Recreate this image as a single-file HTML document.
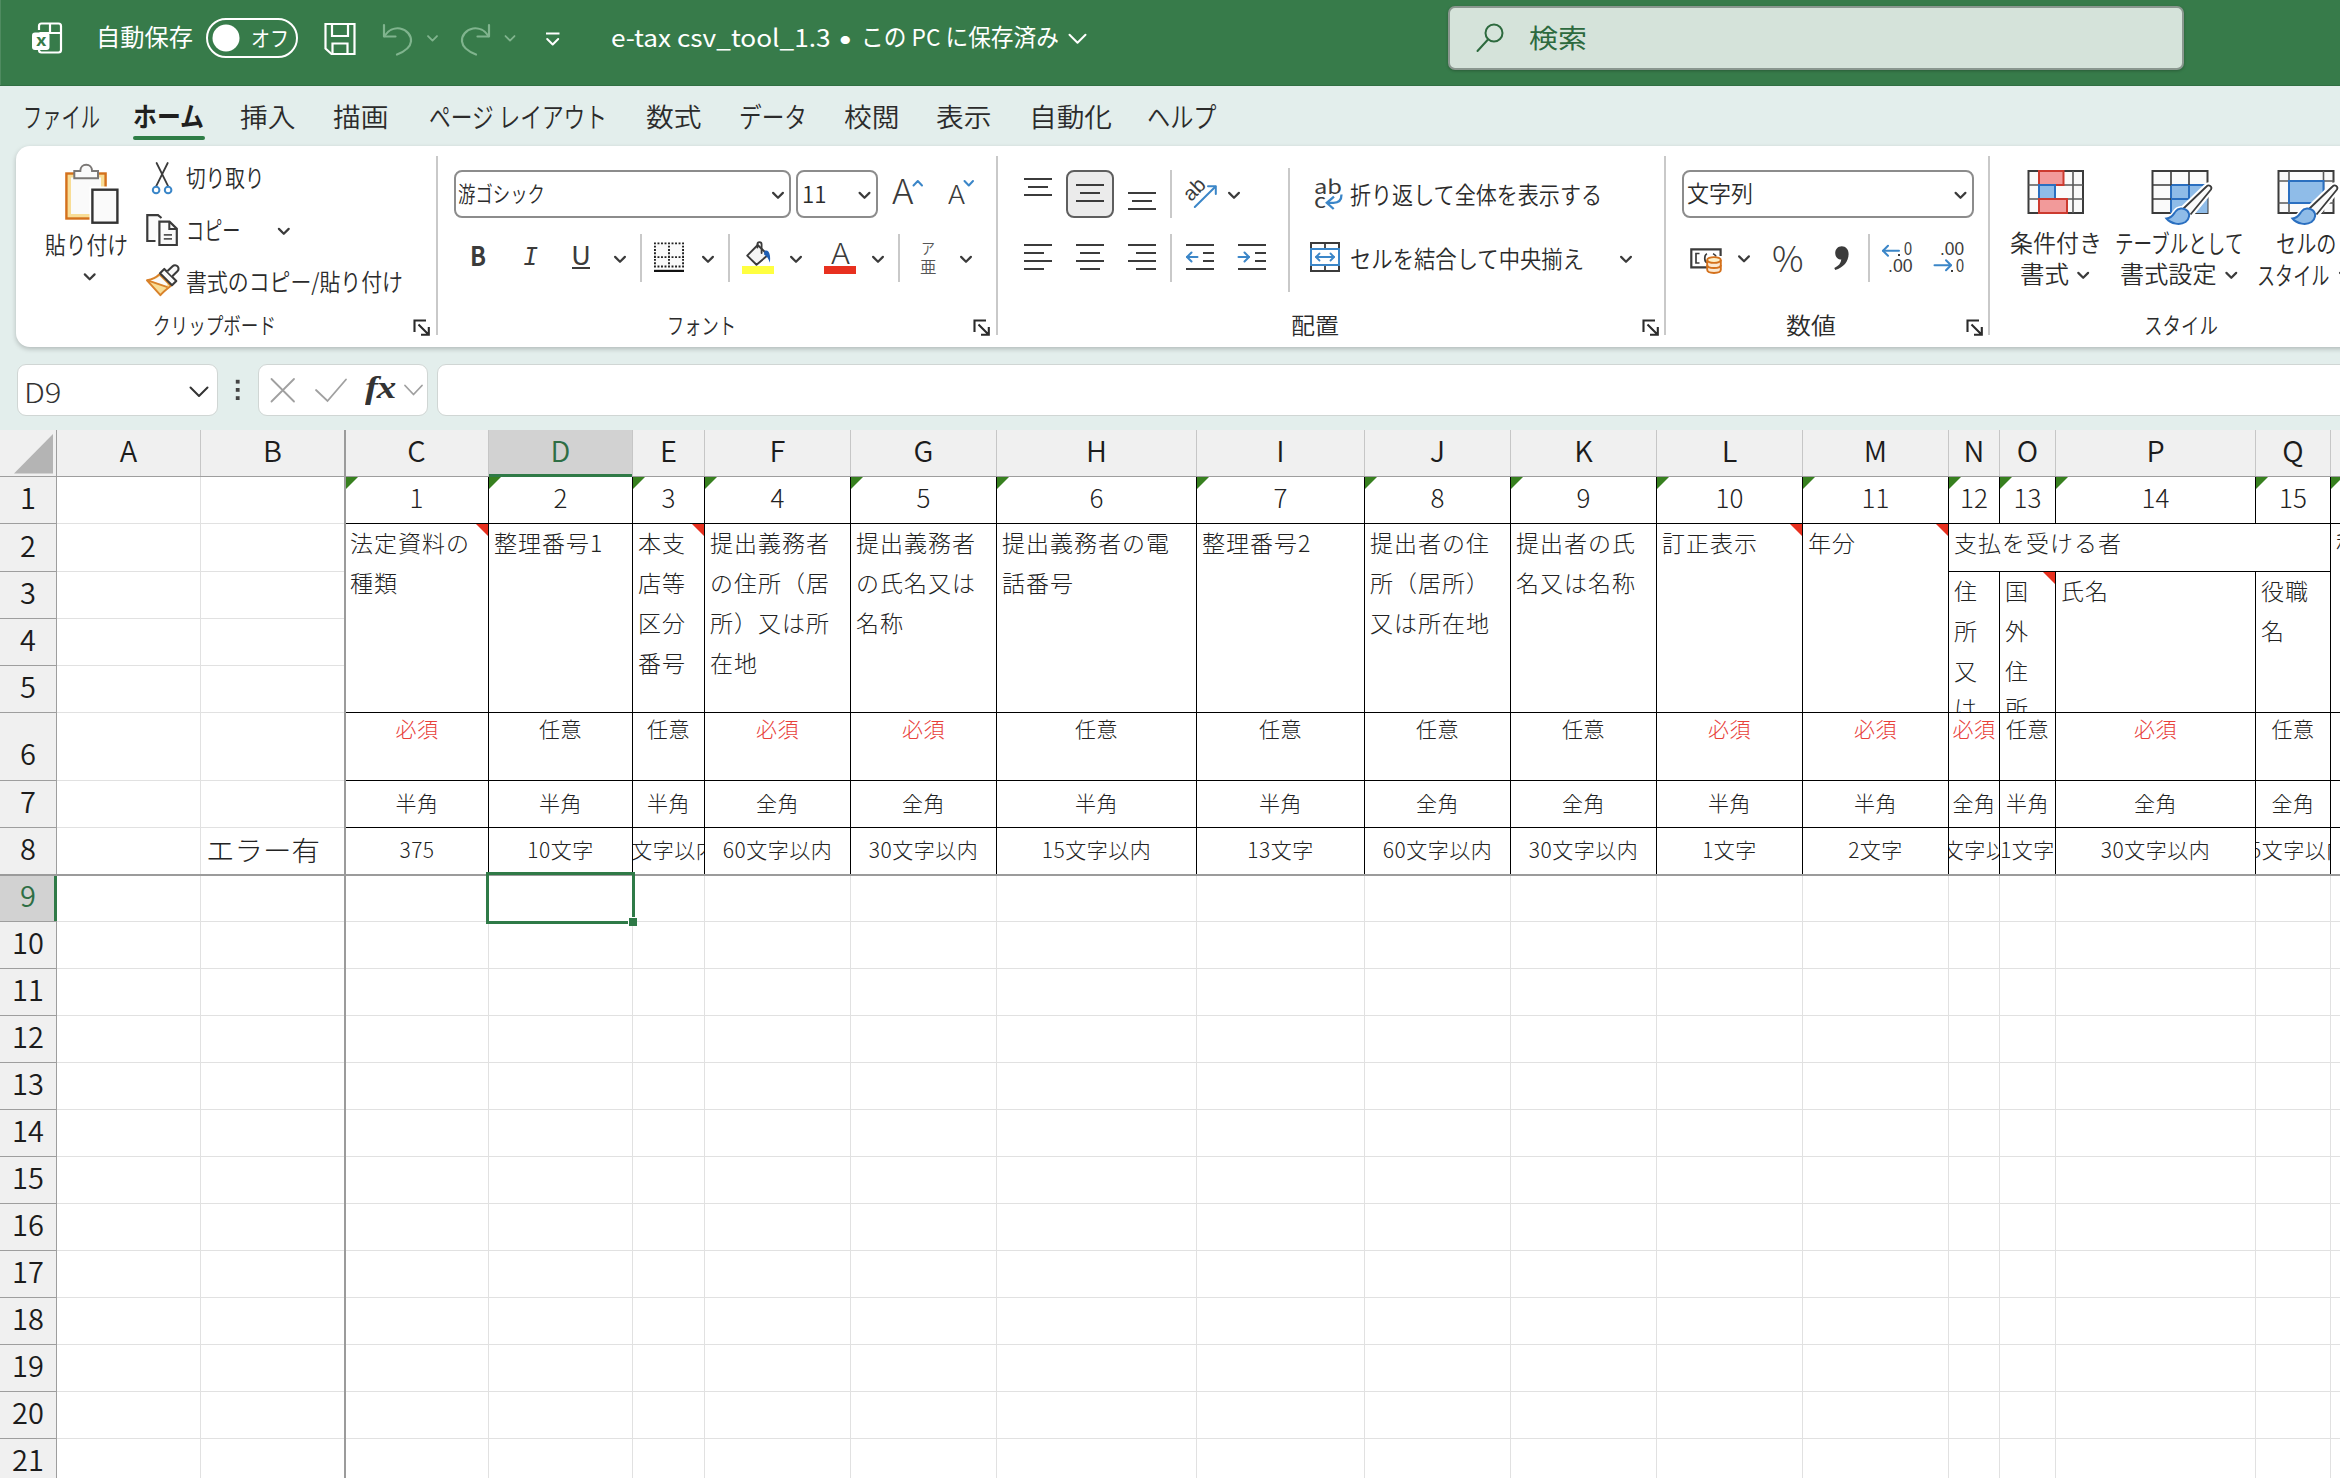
<!DOCTYPE html><html lang="ja"><head><meta charset="utf-8"><title>e-tax csv_tool_1.3 - Excel</title><style>
html,body{margin:0;padding:0}body{width:2340px;height:1478px;overflow:hidden;position:relative;background:#e3eeec;font-family:'Noto Sans CJK JP','Liberation Sans',sans-serif}
#pg{position:absolute;left:0;top:0;width:2340px;height:1478px;overflow:hidden}
#pg div{position:absolute;box-sizing:border-box}
#pg span.t{position:absolute;white-space:nowrap;transform-origin:0 50%}
#pg svg.ov{position:absolute;left:0;top:0}
</style></head><body><div id="pg">
<div style="left:0px;top:0px;width:2340px;height:86px;background:#377b4a"></div>
<div style="left:0px;top:0px;width:1px;height:85px;background:#4f8b60"></div>
<div style="left:0px;top:85px;width:2340px;height:1px;background:#316f43"></div>
<div style="left:1448px;top:6px;width:736px;height:64px;background:#d5e3da;border:2px solid #8a978f;border-radius:7px;box-shadow:0 1px 3px rgba(0,0,0,.25)"></div>
<div style="left:133px;top:136px;width:72px;height:4px;background:#2e7d46;border-radius:2px"></div>
<div style="left:16px;top:146px;width:2400px;height:201px;background:#fff;border-radius:14px;box-shadow:0 2px 5px rgba(0,0,0,.22)"></div>
<div style="left:17px;top:363.5px;width:201px;height:52.5px;background:#fff;border-radius:9px;border:1px solid #d0d6d4"></div>
<div style="left:258px;top:363.5px;width:170px;height:52.5px;background:#fff;border-radius:9px;border:1px solid #d0d6d4"></div>
<div style="left:437px;top:363.5px;width:2000px;height:52.5px;background:#fff;border-radius:9px;border:1px solid #d0d6d4"></div>
<div style="left:436px;top:156px;width:2px;height:179px;background:#c9c9c9"></div>
<div style="left:996px;top:156px;width:2px;height:179px;background:#c9c9c9"></div>
<div style="left:1664px;top:156px;width:2px;height:179px;background:#c9c9c9"></div>
<div style="left:1988px;top:156px;width:2px;height:179px;background:#c9c9c9"></div>
<div style="left:454px;top:170px;width:337px;height:48px;background:#fff;border:2px solid #8c8c8c;border-radius:8px"></div>
<div style="left:796px;top:170px;width:82px;height:48px;background:#fff;border:2px solid #8c8c8c;border-radius:8px"></div>
<div style="left:572px;top:266.5px;width:17.5px;height:2px;background:#3b3b3b"></div>
<div style="left:640px;top:234px;width:2px;height:48px;background:#c9c9c9"></div>
<div style="left:728px;top:234px;width:2px;height:48px;background:#c9c9c9"></div>
<div style="left:742px;top:266px;width:32px;height:8px;background:#ffff40"></div>
<div style="left:824px;top:266px;width:32px;height:8px;background:#e8301f"></div>
<div style="left:898px;top:234px;width:2px;height:48px;background:#c9c9c9"></div>
<div style="left:1066px;top:170px;width:48px;height:48px;background:#ebebeb;border:2px solid #5e5e5e;border-radius:8px"></div>
<div style="left:1170px;top:170px;width:2px;height:48px;background:#c9c9c9"></div>
<div style="left:1170px;top:234px;width:2px;height:48px;background:#c9c9c9"></div>
<div style="left:1288px;top:168px;width:2px;height:124px;background:#c9c9c9"></div>
<div style="left:1682px;top:170px;width:292px;height:48px;background:#fff;border:2px solid #8c8c8c;border-radius:8px"></div>
<div style="left:1868px;top:234px;width:2px;height:48px;background:#c9c9c9"></div>
<div style="left:1897.5px;top:253.5px;width:2.4px;height:2.4px;background:#3b3b3b"></div>
<div style="left:1950.8px;top:270px;width:2.4px;height:2.4px;background:#3b3b3b"></div>
<div style="left:0px;top:430px;width:2340px;height:1048px;background:#fff"></div>
<div style="left:0px;top:430px;width:2340px;height:47px;background:#f0f0f0"></div>
<div style="left:0px;top:430px;width:57px;height:1048px;background:#f0f0f0"></div>
<div style="left:489px;top:430px;width:143px;height:47px;background:#d2d2d2"></div>
<div style="left:0px;top:875px;width:56px;height:46px;background:#d2d2d2"></div>
<div style="left:200px;top:477px;width:1px;height:1001px;background:#e1e1e1"></div>
<div style="left:488px;top:477px;width:1px;height:1001px;background:#e1e1e1"></div>
<div style="left:632px;top:477px;width:1px;height:1001px;background:#e1e1e1"></div>
<div style="left:704px;top:477px;width:1px;height:1001px;background:#e1e1e1"></div>
<div style="left:850px;top:477px;width:1px;height:1001px;background:#e1e1e1"></div>
<div style="left:996px;top:477px;width:1px;height:1001px;background:#e1e1e1"></div>
<div style="left:1196px;top:477px;width:1px;height:1001px;background:#e1e1e1"></div>
<div style="left:1364px;top:477px;width:1px;height:1001px;background:#e1e1e1"></div>
<div style="left:1510px;top:477px;width:1px;height:1001px;background:#e1e1e1"></div>
<div style="left:1656px;top:477px;width:1px;height:1001px;background:#e1e1e1"></div>
<div style="left:1802px;top:477px;width:1px;height:1001px;background:#e1e1e1"></div>
<div style="left:1948px;top:477px;width:1px;height:1001px;background:#e1e1e1"></div>
<div style="left:1999px;top:477px;width:1px;height:1001px;background:#e1e1e1"></div>
<div style="left:2055px;top:477px;width:1px;height:1001px;background:#e1e1e1"></div>
<div style="left:2255px;top:477px;width:1px;height:1001px;background:#e1e1e1"></div>
<div style="left:2330px;top:477px;width:1px;height:1001px;background:#e1e1e1"></div>
<div style="left:57px;top:523px;width:2283px;height:1px;background:#e1e1e1"></div>
<div style="left:57px;top:571px;width:2283px;height:1px;background:#e1e1e1"></div>
<div style="left:57px;top:618px;width:2283px;height:1px;background:#e1e1e1"></div>
<div style="left:57px;top:665px;width:2283px;height:1px;background:#e1e1e1"></div>
<div style="left:57px;top:712px;width:2283px;height:1px;background:#e1e1e1"></div>
<div style="left:57px;top:780px;width:2283px;height:1px;background:#e1e1e1"></div>
<div style="left:57px;top:827px;width:2283px;height:1px;background:#e1e1e1"></div>
<div style="left:57px;top:874px;width:2283px;height:1px;background:#e1e1e1"></div>
<div style="left:57px;top:921px;width:2283px;height:1px;background:#e1e1e1"></div>
<div style="left:57px;top:968px;width:2283px;height:1px;background:#e1e1e1"></div>
<div style="left:57px;top:1015px;width:2283px;height:1px;background:#e1e1e1"></div>
<div style="left:57px;top:1062px;width:2283px;height:1px;background:#e1e1e1"></div>
<div style="left:57px;top:1109px;width:2283px;height:1px;background:#e1e1e1"></div>
<div style="left:57px;top:1156px;width:2283px;height:1px;background:#e1e1e1"></div>
<div style="left:57px;top:1203px;width:2283px;height:1px;background:#e1e1e1"></div>
<div style="left:57px;top:1250px;width:2283px;height:1px;background:#e1e1e1"></div>
<div style="left:57px;top:1297px;width:2283px;height:1px;background:#e1e1e1"></div>
<div style="left:57px;top:1344px;width:2283px;height:1px;background:#e1e1e1"></div>
<div style="left:57px;top:1391px;width:2283px;height:1px;background:#e1e1e1"></div>
<div style="left:57px;top:1438px;width:2283px;height:1px;background:#e1e1e1"></div>
<div style="left:57px;top:1485px;width:2283px;height:1px;background:#e1e1e1"></div>
<div style="left:346px;top:524px;width:1994px;height:188px;background:#fff"></div>
<div style="left:0px;top:476px;width:2340px;height:1px;background:#9e9e9e"></div>
<div style="left:56px;top:430px;width:1px;height:1048px;background:#9e9e9e"></div>
<div style="left:200px;top:430px;width:1px;height:46px;background:#c6c6c6"></div>
<div style="left:488px;top:430px;width:1px;height:46px;background:#c6c6c6"></div>
<div style="left:632px;top:430px;width:1px;height:46px;background:#c6c6c6"></div>
<div style="left:704px;top:430px;width:1px;height:46px;background:#c6c6c6"></div>
<div style="left:850px;top:430px;width:1px;height:46px;background:#c6c6c6"></div>
<div style="left:996px;top:430px;width:1px;height:46px;background:#c6c6c6"></div>
<div style="left:1196px;top:430px;width:1px;height:46px;background:#c6c6c6"></div>
<div style="left:1364px;top:430px;width:1px;height:46px;background:#c6c6c6"></div>
<div style="left:1510px;top:430px;width:1px;height:46px;background:#c6c6c6"></div>
<div style="left:1656px;top:430px;width:1px;height:46px;background:#c6c6c6"></div>
<div style="left:1802px;top:430px;width:1px;height:46px;background:#c6c6c6"></div>
<div style="left:1948px;top:430px;width:1px;height:46px;background:#c6c6c6"></div>
<div style="left:1999px;top:430px;width:1px;height:46px;background:#c6c6c6"></div>
<div style="left:2055px;top:430px;width:1px;height:46px;background:#c6c6c6"></div>
<div style="left:2255px;top:430px;width:1px;height:46px;background:#c6c6c6"></div>
<div style="left:2330px;top:430px;width:1px;height:46px;background:#c6c6c6"></div>
<div style="left:0px;top:523px;width:56px;height:1px;background:#9e9e9e"></div>
<div style="left:0px;top:571px;width:56px;height:1px;background:#9e9e9e"></div>
<div style="left:0px;top:618px;width:56px;height:1px;background:#9e9e9e"></div>
<div style="left:0px;top:665px;width:56px;height:1px;background:#9e9e9e"></div>
<div style="left:0px;top:712px;width:56px;height:1px;background:#9e9e9e"></div>
<div style="left:0px;top:780px;width:56px;height:1px;background:#9e9e9e"></div>
<div style="left:0px;top:827px;width:56px;height:1px;background:#9e9e9e"></div>
<div style="left:0px;top:874px;width:56px;height:1px;background:#9e9e9e"></div>
<div style="left:0px;top:921px;width:56px;height:1px;background:#9e9e9e"></div>
<div style="left:0px;top:968px;width:56px;height:1px;background:#9e9e9e"></div>
<div style="left:0px;top:1015px;width:56px;height:1px;background:#9e9e9e"></div>
<div style="left:0px;top:1062px;width:56px;height:1px;background:#9e9e9e"></div>
<div style="left:0px;top:1109px;width:56px;height:1px;background:#9e9e9e"></div>
<div style="left:0px;top:1156px;width:56px;height:1px;background:#9e9e9e"></div>
<div style="left:0px;top:1203px;width:56px;height:1px;background:#9e9e9e"></div>
<div style="left:0px;top:1250px;width:56px;height:1px;background:#9e9e9e"></div>
<div style="left:0px;top:1297px;width:56px;height:1px;background:#9e9e9e"></div>
<div style="left:0px;top:1344px;width:56px;height:1px;background:#9e9e9e"></div>
<div style="left:0px;top:1391px;width:56px;height:1px;background:#9e9e9e"></div>
<div style="left:0px;top:1438px;width:56px;height:1px;background:#9e9e9e"></div>
<div style="left:0px;top:1485px;width:56px;height:1px;background:#9e9e9e"></div>
<div style="left:489px;top:474px;width:143px;height:3px;background:#2f7a47"></div>
<div style="left:54px;top:876px;width:3px;height:45px;background:#2f7a47"></div>
<div style="left:488px;top:477px;width:1px;height:398px;background:#000"></div>
<div style="left:632px;top:477px;width:1px;height:398px;background:#000"></div>
<div style="left:704px;top:477px;width:1px;height:398px;background:#000"></div>
<div style="left:850px;top:477px;width:1px;height:398px;background:#000"></div>
<div style="left:996px;top:477px;width:1px;height:398px;background:#000"></div>
<div style="left:1196px;top:477px;width:1px;height:398px;background:#000"></div>
<div style="left:1364px;top:477px;width:1px;height:398px;background:#000"></div>
<div style="left:1510px;top:477px;width:1px;height:398px;background:#000"></div>
<div style="left:1656px;top:477px;width:1px;height:398px;background:#000"></div>
<div style="left:1802px;top:477px;width:1px;height:398px;background:#000"></div>
<div style="left:1948px;top:477px;width:1px;height:398px;background:#000"></div>
<div style="left:1999px;top:477px;width:1px;height:47px;background:#000"></div>
<div style="left:1999px;top:571px;width:1px;height:304px;background:#000"></div>
<div style="left:2055px;top:477px;width:1px;height:47px;background:#000"></div>
<div style="left:2055px;top:571px;width:1px;height:304px;background:#000"></div>
<div style="left:2255px;top:477px;width:1px;height:47px;background:#000"></div>
<div style="left:2255px;top:571px;width:1px;height:304px;background:#000"></div>
<div style="left:2330px;top:477px;width:1px;height:398px;background:#000"></div>
<div style="left:345px;top:523px;width:1996px;height:1px;background:#000"></div>
<div style="left:345px;top:712px;width:1996px;height:1px;background:#000"></div>
<div style="left:345px;top:780px;width:1996px;height:1px;background:#000"></div>
<div style="left:345px;top:827px;width:1996px;height:1px;background:#000"></div>
<div style="left:1948px;top:571px;width:383px;height:1px;background:#000"></div>
<div style="left:344px;top:430px;width:2px;height:1048px;background:#9b9b9b"></div>
<div style="left:0px;top:874px;width:2340px;height:2px;background:#9b9b9b"></div>
<div style="left:1949px;top:692px;width:50px;height:20px;overflow:hidden"><span style="position:absolute;left:5px;top:-5px;font-size:23px;line-height:40px;font-weight:300;color:#222;white-space:nowrap">は</span></div>
<div style="left:2000px;top:692px;width:55px;height:20px;overflow:hidden"><span style="position:absolute;left:5px;top:-5px;font-size:23px;line-height:40px;font-weight:300;color:#222;white-space:nowrap">所</span></div>
<div style="left:346px;top:707.3px;width:142px;height:42px;overflow:hidden;z-index:3"><span style="position:absolute;left:50%;top:5px;transform:translateX(-50%);font-size:21px;line-height:32px;font-weight:300;color:#e8413a;white-space:nowrap;letter-spacing:0.5px">必須</span></div>
<div style="left:346px;top:780.8px;width:142px;height:42px;overflow:hidden;z-index:3"><span style="position:absolute;left:50%;top:5px;transform:translateX(-50%);font-size:21px;line-height:32px;font-weight:300;color:#222;white-space:nowrap;letter-spacing:0.5px">半角</span></div>
<div style="left:346px;top:828.3px;width:142px;height:42px;overflow:hidden;z-index:3"><span style="position:absolute;left:50%;top:5px;transform:translateX(-50%);font-size:21px;line-height:32px;font-weight:300;color:#222;white-space:nowrap;letter-spacing:0.5px">375</span></div>
<div style="left:489px;top:707.3px;width:143px;height:42px;overflow:hidden;z-index:3"><span style="position:absolute;left:50%;top:5px;transform:translateX(-50%);font-size:21px;line-height:32px;font-weight:300;color:#222;white-space:nowrap;letter-spacing:0.5px">任意</span></div>
<div style="left:489px;top:780.8px;width:143px;height:42px;overflow:hidden;z-index:3"><span style="position:absolute;left:50%;top:5px;transform:translateX(-50%);font-size:21px;line-height:32px;font-weight:300;color:#222;white-space:nowrap;letter-spacing:0.5px">半角</span></div>
<div style="left:489px;top:828.3px;width:143px;height:42px;overflow:hidden;z-index:3"><span style="position:absolute;left:50%;top:5px;transform:translateX(-50%);font-size:21px;line-height:32px;font-weight:300;color:#222;white-space:nowrap;letter-spacing:0.5px">10文字</span></div>
<div style="left:633px;top:707.3px;width:71px;height:42px;overflow:hidden;z-index:3"><span style="position:absolute;left:50%;top:5px;transform:translateX(-50%);font-size:21px;line-height:32px;font-weight:300;color:#222;white-space:nowrap;letter-spacing:0.5px">任意</span></div>
<div style="left:633px;top:780.8px;width:71px;height:42px;overflow:hidden;z-index:3"><span style="position:absolute;left:50%;top:5px;transform:translateX(-50%);font-size:21px;line-height:32px;font-weight:300;color:#222;white-space:nowrap;letter-spacing:0.5px">半角</span></div>
<div style="left:633px;top:828.3px;width:71px;height:42px;overflow:hidden;z-index:3"><span style="position:absolute;left:50%;top:5px;transform:translateX(-50%);font-size:21px;line-height:32px;font-weight:300;color:#222;white-space:nowrap;letter-spacing:0.5px">4文字以内</span></div>
<div style="left:705px;top:707.3px;width:145px;height:42px;overflow:hidden;z-index:3"><span style="position:absolute;left:50%;top:5px;transform:translateX(-50%);font-size:21px;line-height:32px;font-weight:300;color:#e8413a;white-space:nowrap;letter-spacing:0.5px">必須</span></div>
<div style="left:705px;top:780.8px;width:145px;height:42px;overflow:hidden;z-index:3"><span style="position:absolute;left:50%;top:5px;transform:translateX(-50%);font-size:21px;line-height:32px;font-weight:300;color:#222;white-space:nowrap;letter-spacing:0.5px">全角</span></div>
<div style="left:705px;top:828.3px;width:145px;height:42px;overflow:hidden;z-index:3"><span style="position:absolute;left:50%;top:5px;transform:translateX(-50%);font-size:21px;line-height:32px;font-weight:300;color:#222;white-space:nowrap;letter-spacing:0.5px">60文字以内</span></div>
<div style="left:851px;top:707.3px;width:145px;height:42px;overflow:hidden;z-index:3"><span style="position:absolute;left:50%;top:5px;transform:translateX(-50%);font-size:21px;line-height:32px;font-weight:300;color:#e8413a;white-space:nowrap;letter-spacing:0.5px">必須</span></div>
<div style="left:851px;top:780.8px;width:145px;height:42px;overflow:hidden;z-index:3"><span style="position:absolute;left:50%;top:5px;transform:translateX(-50%);font-size:21px;line-height:32px;font-weight:300;color:#222;white-space:nowrap;letter-spacing:0.5px">全角</span></div>
<div style="left:851px;top:828.3px;width:145px;height:42px;overflow:hidden;z-index:3"><span style="position:absolute;left:50%;top:5px;transform:translateX(-50%);font-size:21px;line-height:32px;font-weight:300;color:#222;white-space:nowrap;letter-spacing:0.5px">30文字以内</span></div>
<div style="left:997px;top:707.3px;width:199px;height:42px;overflow:hidden;z-index:3"><span style="position:absolute;left:50%;top:5px;transform:translateX(-50%);font-size:21px;line-height:32px;font-weight:300;color:#222;white-space:nowrap;letter-spacing:0.5px">任意</span></div>
<div style="left:997px;top:780.8px;width:199px;height:42px;overflow:hidden;z-index:3"><span style="position:absolute;left:50%;top:5px;transform:translateX(-50%);font-size:21px;line-height:32px;font-weight:300;color:#222;white-space:nowrap;letter-spacing:0.5px">半角</span></div>
<div style="left:997px;top:828.3px;width:199px;height:42px;overflow:hidden;z-index:3"><span style="position:absolute;left:50%;top:5px;transform:translateX(-50%);font-size:21px;line-height:32px;font-weight:300;color:#222;white-space:nowrap;letter-spacing:0.5px">15文字以内</span></div>
<div style="left:1197px;top:707.3px;width:167px;height:42px;overflow:hidden;z-index:3"><span style="position:absolute;left:50%;top:5px;transform:translateX(-50%);font-size:21px;line-height:32px;font-weight:300;color:#222;white-space:nowrap;letter-spacing:0.5px">任意</span></div>
<div style="left:1197px;top:780.8px;width:167px;height:42px;overflow:hidden;z-index:3"><span style="position:absolute;left:50%;top:5px;transform:translateX(-50%);font-size:21px;line-height:32px;font-weight:300;color:#222;white-space:nowrap;letter-spacing:0.5px">半角</span></div>
<div style="left:1197px;top:828.3px;width:167px;height:42px;overflow:hidden;z-index:3"><span style="position:absolute;left:50%;top:5px;transform:translateX(-50%);font-size:21px;line-height:32px;font-weight:300;color:#222;white-space:nowrap;letter-spacing:0.5px">13文字</span></div>
<div style="left:1365px;top:707.3px;width:145px;height:42px;overflow:hidden;z-index:3"><span style="position:absolute;left:50%;top:5px;transform:translateX(-50%);font-size:21px;line-height:32px;font-weight:300;color:#222;white-space:nowrap;letter-spacing:0.5px">任意</span></div>
<div style="left:1365px;top:780.8px;width:145px;height:42px;overflow:hidden;z-index:3"><span style="position:absolute;left:50%;top:5px;transform:translateX(-50%);font-size:21px;line-height:32px;font-weight:300;color:#222;white-space:nowrap;letter-spacing:0.5px">全角</span></div>
<div style="left:1365px;top:828.3px;width:145px;height:42px;overflow:hidden;z-index:3"><span style="position:absolute;left:50%;top:5px;transform:translateX(-50%);font-size:21px;line-height:32px;font-weight:300;color:#222;white-space:nowrap;letter-spacing:0.5px">60文字以内</span></div>
<div style="left:1511px;top:707.3px;width:145px;height:42px;overflow:hidden;z-index:3"><span style="position:absolute;left:50%;top:5px;transform:translateX(-50%);font-size:21px;line-height:32px;font-weight:300;color:#222;white-space:nowrap;letter-spacing:0.5px">任意</span></div>
<div style="left:1511px;top:780.8px;width:145px;height:42px;overflow:hidden;z-index:3"><span style="position:absolute;left:50%;top:5px;transform:translateX(-50%);font-size:21px;line-height:32px;font-weight:300;color:#222;white-space:nowrap;letter-spacing:0.5px">全角</span></div>
<div style="left:1511px;top:828.3px;width:145px;height:42px;overflow:hidden;z-index:3"><span style="position:absolute;left:50%;top:5px;transform:translateX(-50%);font-size:21px;line-height:32px;font-weight:300;color:#222;white-space:nowrap;letter-spacing:0.5px">30文字以内</span></div>
<div style="left:1657px;top:707.3px;width:145px;height:42px;overflow:hidden;z-index:3"><span style="position:absolute;left:50%;top:5px;transform:translateX(-50%);font-size:21px;line-height:32px;font-weight:300;color:#e8413a;white-space:nowrap;letter-spacing:0.5px">必須</span></div>
<div style="left:1657px;top:780.8px;width:145px;height:42px;overflow:hidden;z-index:3"><span style="position:absolute;left:50%;top:5px;transform:translateX(-50%);font-size:21px;line-height:32px;font-weight:300;color:#222;white-space:nowrap;letter-spacing:0.5px">半角</span></div>
<div style="left:1657px;top:828.3px;width:145px;height:42px;overflow:hidden;z-index:3"><span style="position:absolute;left:50%;top:5px;transform:translateX(-50%);font-size:21px;line-height:32px;font-weight:300;color:#222;white-space:nowrap;letter-spacing:0.5px">1文字</span></div>
<div style="left:1803px;top:707.3px;width:145px;height:42px;overflow:hidden;z-index:3"><span style="position:absolute;left:50%;top:5px;transform:translateX(-50%);font-size:21px;line-height:32px;font-weight:300;color:#e8413a;white-space:nowrap;letter-spacing:0.5px">必須</span></div>
<div style="left:1803px;top:780.8px;width:145px;height:42px;overflow:hidden;z-index:3"><span style="position:absolute;left:50%;top:5px;transform:translateX(-50%);font-size:21px;line-height:32px;font-weight:300;color:#222;white-space:nowrap;letter-spacing:0.5px">半角</span></div>
<div style="left:1803px;top:828.3px;width:145px;height:42px;overflow:hidden;z-index:3"><span style="position:absolute;left:50%;top:5px;transform:translateX(-50%);font-size:21px;line-height:32px;font-weight:300;color:#222;white-space:nowrap;letter-spacing:0.5px">2文字</span></div>
<div style="left:1949px;top:707.3px;width:50px;height:42px;overflow:hidden;z-index:3"><span style="position:absolute;left:50%;top:5px;transform:translateX(-50%);font-size:21px;line-height:32px;font-weight:300;color:#e8413a;white-space:nowrap;letter-spacing:0.5px">必須</span></div>
<div style="left:1949px;top:780.8px;width:50px;height:42px;overflow:hidden;z-index:3"><span style="position:absolute;left:50%;top:5px;transform:translateX(-50%);font-size:21px;line-height:32px;font-weight:300;color:#222;white-space:nowrap;letter-spacing:0.5px">全角</span></div>
<div style="left:1949px;top:828.3px;width:50px;height:42px;overflow:hidden;z-index:3"><span style="position:absolute;left:50%;top:5px;transform:translateX(-50%);font-size:21px;line-height:32px;font-weight:300;color:#222;white-space:nowrap;letter-spacing:0.5px">60文字以内</span></div>
<div style="left:2000px;top:707.3px;width:55px;height:42px;overflow:hidden;z-index:3"><span style="position:absolute;left:50%;top:5px;transform:translateX(-50%);font-size:21px;line-height:32px;font-weight:300;color:#222;white-space:nowrap;letter-spacing:0.5px">任意</span></div>
<div style="left:2000px;top:780.8px;width:55px;height:42px;overflow:hidden;z-index:3"><span style="position:absolute;left:50%;top:5px;transform:translateX(-50%);font-size:21px;line-height:32px;font-weight:300;color:#222;white-space:nowrap;letter-spacing:0.5px">半角</span></div>
<div style="left:2000px;top:828.3px;width:55px;height:42px;overflow:hidden;z-index:3"><span style="position:absolute;left:50%;top:5px;transform:translateX(-50%);font-size:21px;line-height:32px;font-weight:300;color:#222;white-space:nowrap;letter-spacing:0.5px">1文字</span></div>
<div style="left:2056px;top:707.3px;width:199px;height:42px;overflow:hidden;z-index:3"><span style="position:absolute;left:50%;top:5px;transform:translateX(-50%);font-size:21px;line-height:32px;font-weight:300;color:#e8413a;white-space:nowrap;letter-spacing:0.5px">必須</span></div>
<div style="left:2056px;top:780.8px;width:199px;height:42px;overflow:hidden;z-index:3"><span style="position:absolute;left:50%;top:5px;transform:translateX(-50%);font-size:21px;line-height:32px;font-weight:300;color:#222;white-space:nowrap;letter-spacing:0.5px">全角</span></div>
<div style="left:2056px;top:828.3px;width:199px;height:42px;overflow:hidden;z-index:3"><span style="position:absolute;left:50%;top:5px;transform:translateX(-50%);font-size:21px;line-height:32px;font-weight:300;color:#222;white-space:nowrap;letter-spacing:0.5px">30文字以内</span></div>
<div style="left:2256px;top:707.3px;width:74px;height:42px;overflow:hidden;z-index:3"><span style="position:absolute;left:50%;top:5px;transform:translateX(-50%);font-size:21px;line-height:32px;font-weight:300;color:#222;white-space:nowrap;letter-spacing:0.5px">任意</span></div>
<div style="left:2256px;top:780.8px;width:74px;height:42px;overflow:hidden;z-index:3"><span style="position:absolute;left:50%;top:5px;transform:translateX(-50%);font-size:21px;line-height:32px;font-weight:300;color:#222;white-space:nowrap;letter-spacing:0.5px">全角</span></div>
<div style="left:2256px;top:828.3px;width:74px;height:42px;overflow:hidden;z-index:3"><span style="position:absolute;left:50%;top:5px;transform:translateX(-50%);font-size:21px;line-height:32px;font-weight:300;color:#222;white-space:nowrap;letter-spacing:0.5px">15文字以内</span></div>
<div style="left:486px;top:872px;width:149px;height:52px;border:3px solid #2f7a47;background:transparent"></div>
<div style="left:628px;top:917px;width:9px;height:9px;background:#2f7a47;border:1.5px solid #fff;border-right:none;border-bottom:none"></div>
<svg class="ov" width="2340" height="1478" viewBox="0 0 2340 1478">
<g fill="none" stroke="#ffffff" stroke-width="2.2" stroke-linejoin="round"><path d="M39 30V26a2.5 2.5 0 0 1 2.5-2.5H58.5a2.5 2.5 0 0 1 2.5 2.5V50a2.5 2.5 0 0 1-2.5 2.5H41.5a2.5 2.5 0 0 1-2.5-2.5V48"/><path d="M50 23.5V33M39.5 33H61M50 33"/></g><rect x="32" y="32.5" width="17.5" height="17.5" rx="3" fill="#ffffff"/>
<rect x="207" y="19" width="90" height="38" rx="19" fill="none" stroke="#ffffff" stroke-width="2"/><circle cx="226" cy="38" r="13.5" fill="#ffffff"/>
<g fill="none" stroke="#ffffff" stroke-width="2.2" stroke-linejoin="miter"><path d="M325.5 24H354.5V54H331.5L325.5 48.5Z"/><path d="M332 24V36H348V24M332.5 54V43.5H347.5V54"/></g>
<g fill="none" stroke="#80b48e" stroke-width="2.2" stroke-linecap="round" stroke-linejoin="round"><path d="M384 25V36.5H395.5"/><path d="M384.5 36C388 30.5 394 27.5 400 28.5C407 29.7 411.5 35.5 411 41.5C410.5 46 406 51 397 54.5"/></g>
<path d="M428.0 36.05L432.5 40.55L437.0 36.05" fill="none" stroke="#80b48e" stroke-width="1.8" stroke-linecap="round" stroke-linejoin="round"/>
<g fill="none" stroke="#80b48e" stroke-width="2.2" stroke-linecap="round" stroke-linejoin="round"><path d="M489 25V36.5H477.5"/><path d="M488.5 36C485 30.5 479 27.5 473 28.5C466 29.7 461.5 35.5 462 41.5C462.5 46 467 51 476 54.5"/></g>
<path d="M505.5 36.05L510 40.55L514.5 36.05" fill="none" stroke="#80b48e" stroke-width="1.8" stroke-linecap="round" stroke-linejoin="round"/>
<path d="M546 33.5H559.5" stroke="#ffffff" stroke-width="2" fill="none"/>
<path d="M547.2 39.05L552.7 44.55L558.2 39.05" fill="none" stroke="#ffffff" stroke-width="2" stroke-linecap="round" stroke-linejoin="round"/>
<path d="M1069.5 34.8L1077.5 42.8L1085.5 34.8" fill="none" stroke="#ffffff" stroke-width="2" stroke-linecap="round" stroke-linejoin="round"/>
<g fill="none" stroke="#2d6a3e" stroke-width="2" stroke-linecap="round"><circle cx="1494" cy="33" r="8.5"/><path d="M1488 39.5L1477.5 51"/></g>
<path d="M190.5 387.5L199 396L207.5 387.5" fill="none" stroke="#333" stroke-width="2" stroke-linecap="round" stroke-linejoin="round"/>
<g fill="#444"><rect x="235.8" y="379.8" width="3.8" height="3.8"/><rect x="235.8" y="388" width="3.8" height="3.8"/><rect x="235.8" y="396.2" width="3.8" height="3.8"/></g>
<g fill="none" stroke="#a0a0a0" stroke-width="1.8" stroke-linecap="round"><path d="M271.5 379L294 401.5M294 379L271.5 401.5"/><path d="M316 390L327.5 401L346 379.5"/></g>
<path d="M405 385.5L413.5 394.5L422 385.5" fill="none" stroke="#a0a0a0" stroke-width="1.8" stroke-linecap="round" stroke-linejoin="round"/>
<g fill="none" stroke="#2b2b2b" stroke-width="2.1"><path d="M426 320.5H414.5V332"/><path d="M418.5 324.5L428.5 334.5M428.8 327V334.8H421"/></g>
<g fill="none" stroke="#2b2b2b" stroke-width="2.1"><path d="M986 320.5H974.5V332"/><path d="M978.5 324.5L988.5 334.5M988.8 327V334.8H981"/></g>
<g fill="none" stroke="#2b2b2b" stroke-width="2.1"><path d="M1655 320.5H1643.5V332"/><path d="M1647.5 324.5L1657.5 334.5M1657.8 327V334.8H1650"/></g>
<g fill="none" stroke="#2b2b2b" stroke-width="2.1"><path d="M1979 320.5H1967.5V332"/><path d="M1971.5 324.5L1981.5 334.5M1981.8 327V334.8H1974"/></g>
<g stroke-linejoin="miter"><rect x="66.4" y="173.5" width="39.2" height="45" fill="#f8dd96" stroke="#d4711c" stroke-width="2.4"/><rect x="71" y="177.5" width="30" height="36.5" fill="#fafafa"/><path d="M74.3 178.3V171H80.3C80.3 167 83 164.8 86.2 164.8C89.4 164.8 92.1 167 92.1 171H98V178.3Z" fill="#fafafa" stroke="#7a7775" stroke-width="2"/><rect x="89.5" y="186.5" width="31" height="39" fill="#fff"/><rect x="92.4" y="189.7" width="25" height="33" fill="#fafafa" stroke="#333" stroke-width="2.4"/></g>
<path d="M84.8 274.35L89.7 279.25L94.60000000000001 274.35" fill="none" stroke="#3b3b3b" stroke-width="2.2" stroke-linecap="round" stroke-linejoin="round"/>
<g fill="none" stroke="#3b3b3b" stroke-width="1.8" stroke-linecap="round"><path d="M156.6 163L168.2 186.4M167.7 163L156.1 186.4"/></g><g fill="#fff" stroke="#3b86c8" stroke-width="2"><circle cx="156.1" cy="190" r="3.3"/><circle cx="168.1" cy="190" r="3.3"/></g>
<g fill="#fafafa" stroke="#3b3b3b" stroke-width="2.2" stroke-linejoin="miter"><path d="M155.5 241H147.3V215.2H158L161.5 218"/><path d="M159.4 221.6H169.5L176.8 228.6V245H159.4Z"/><path d="M169.3 221.8V229H176.6" fill="none" stroke-width="2"/><path d="M163.8 234.8H172M163.8 238.8H172" stroke-width="1.7" stroke="#555"/></g>
<path d="M278.90000000000003 228.85000000000002L283.8 233.75L288.7 228.85000000000002" fill="none" stroke="#3b3b3b" stroke-width="2.2" stroke-linecap="round" stroke-linejoin="round"/>
<g stroke-linejoin="round"><path d="M147 280.3C152 279.5 156.5 277.3 159.5 274.3L171 285.8C167 289 163 292 160.4 295.2Z" fill="#f8dd96" stroke="#d9822b" stroke-width="2"/><path d="M150.5 280.6C154.5 279.6 157.5 278 159.7 276.2L167.5 284L166.5 286.2Z" fill="#fafafa"/><path d="M147.5 280.4L167.5 287.2" fill="none" stroke="#d9822b" stroke-width="1.8"/><path d="M160 273.2L164.3 268.9L176.3 280.9L172 285.2Z" fill="#fafafa" stroke="#3b3b3b" stroke-width="2.1"/><path d="M167.3 271.2L172.6 266.2C174 264.9 176.3 265 177.6 266.4C178.9 267.8 178.8 270 177.4 271.3L172.3 276.2" fill="#fafafa" stroke="#3b3b3b" stroke-width="2.1"/></g>
<path d="M773.1 192.85000000000002L778 197.75L782.9 192.85000000000002" fill="none" stroke="#3b3b3b" stroke-width="2.2" stroke-linecap="round" stroke-linejoin="round"/>
<path d="M859.6 192.85000000000002L864.5 197.75L869.4 192.85000000000002" fill="none" stroke="#3b3b3b" stroke-width="2.2" stroke-linecap="round" stroke-linejoin="round"/>
<path d="M913.5 185.5L917.8 181L922 185.5" fill="none" stroke="#3b86c8" stroke-width="2" stroke-linecap="round" stroke-linejoin="round"/>
<path d="M964.5 181L968.8 185.5L973 181" fill="none" stroke="#3b86c8" stroke-width="2" stroke-linecap="round" stroke-linejoin="round"/>
<path d="M615.1 256.85L620 261.75L624.9 256.85" fill="none" stroke="#3b3b3b" stroke-width="2.2" stroke-linecap="round" stroke-linejoin="round"/>
<rect x="654" y="242.4" width="30" height="25.1" fill="#fafafa"/><path d="M654.0 242.4h1.9v1.9h-1.9zM654.0 245.71h1.9v1.9h-1.9zM654.0 249.03h1.9v1.9h-1.9zM654.0 252.34h1.9v1.9h-1.9zM654.0 255.66h1.9v1.9h-1.9zM654.0 256.15h1.9v1.9h-1.9zM654.0 258.97h1.9v1.9h-1.9zM654.0 262.29h1.9v1.9h-1.9zM654.0 265.6h1.9v1.9h-1.9zM657.51 242.4h1.9v1.9h-1.9zM657.51 256.15h1.9v1.9h-1.9zM657.51 265.6h1.9v1.9h-1.9zM661.02 242.4h1.9v1.9h-1.9zM661.02 256.15h1.9v1.9h-1.9zM661.02 265.6h1.9v1.9h-1.9zM664.54 242.4h1.9v1.9h-1.9zM664.54 256.15h1.9v1.9h-1.9zM664.54 265.6h1.9v1.9h-1.9zM668.05 242.4h1.9v1.9h-1.9zM668.05 245.71h1.9v1.9h-1.9zM668.05 249.03h1.9v1.9h-1.9zM668.05 252.34h1.9v1.9h-1.9zM668.05 255.66h1.9v1.9h-1.9zM668.05 256.15h1.9v1.9h-1.9zM668.05 258.97h1.9v1.9h-1.9zM668.05 262.29h1.9v1.9h-1.9zM668.05 265.6h1.9v1.9h-1.9zM671.56 242.4h1.9v1.9h-1.9zM671.56 256.15h1.9v1.9h-1.9zM671.56 265.6h1.9v1.9h-1.9zM675.08 242.4h1.9v1.9h-1.9zM675.08 256.15h1.9v1.9h-1.9zM675.08 265.6h1.9v1.9h-1.9zM678.59 242.4h1.9v1.9h-1.9zM678.59 256.15h1.9v1.9h-1.9zM678.59 265.6h1.9v1.9h-1.9zM682.1 242.4h1.9v1.9h-1.9zM682.1 245.71h1.9v1.9h-1.9zM682.1 249.03h1.9v1.9h-1.9zM682.1 252.34h1.9v1.9h-1.9zM682.1 255.66h1.9v1.9h-1.9zM682.1 256.15h1.9v1.9h-1.9zM682.1 258.97h1.9v1.9h-1.9zM682.1 262.29h1.9v1.9h-1.9zM682.1 265.6h1.9v1.9h-1.9z" fill="#1f1f1f"/><path d="M654 270.9H684" stroke="#111" stroke-width="2.2"/>
<path d="M703.1 256.85L708 261.75L712.9 256.85" fill="none" stroke="#3b3b3b" stroke-width="2.2" stroke-linecap="round" stroke-linejoin="round"/>
<path d="M747.2 255.6L757.7 245L768 255L756.5 264.8Z" fill="#f5f5f5" stroke="#3b3b3b" stroke-width="1.9" stroke-linejoin="round"/><path d="M757.4 247.5V244.6C757.4 241.4 761.6 241.4 761.6 244.6V253" fill="none" stroke="#3b3b3b" stroke-width="1.8" stroke-linecap="round"/><path d="M764.4 251C768 249.3 771.2 253 769.8 262.8C768.6 258.6 767 256 764 254.4Z" fill="#1e5fb5"/>
<path d="M791.1 256.85L796 261.75L800.9 256.85" fill="none" stroke="#3b3b3b" stroke-width="2.2" stroke-linecap="round" stroke-linejoin="round"/>
<path d="M873.1 256.85L878 261.75L882.9 256.85" fill="none" stroke="#3b3b3b" stroke-width="2.2" stroke-linecap="round" stroke-linejoin="round"/>
<path d="M961.1 256.85L966 261.75L970.9 256.85" fill="none" stroke="#3b3b3b" stroke-width="2.2" stroke-linecap="round" stroke-linejoin="round"/>
<path d="M1024 179H1052M1028.0 187H1048.0M1024 195H1052" stroke="#3b3b3b" stroke-width="2" fill="none" shape-rendering="crispEdges"/>
<path d="M1076 185H1104M1080.0 193H1100.0M1076 201H1104" stroke="#3b3b3b" stroke-width="2" fill="none" shape-rendering="crispEdges"/>
<path d="M1128 193H1156M1132.0 201H1152.0M1128 209H1156" stroke="#3b3b3b" stroke-width="2" fill="none" shape-rendering="crispEdges"/>
<path d="M1024 245H1052M1024 253H1044M1024 261H1052M1024 269H1044" stroke="#3b3b3b" stroke-width="2" fill="none" shape-rendering="crispEdges"/>
<path d="M1076 245H1104M1080.0 253H1100.0M1076 261H1104M1080.0 269H1100.0" stroke="#3b3b3b" stroke-width="2" fill="none" shape-rendering="crispEdges"/>
<path d="M1128 245H1156M1136 253H1156M1128 261H1156M1136 269H1156" stroke="#3b3b3b" stroke-width="2" fill="none" shape-rendering="crispEdges"/>
<text x="1194.5" y="196" text-anchor="middle" font-size="20.5" font-family="'Liberation Sans','Noto Sans CJK JP',sans-serif" fill="#3b3b3b" transform="rotate(-45 1194.5 189.5)">ab</text>
<g fill="none" stroke="#3b86c8" stroke-width="2" stroke-linecap="round" stroke-linejoin="round"><path d="M1194.8 207L1215.3 186.8"/><path d="M1208 186.3H1215.8V194"/></g>
<path d="M1229.1 192.85000000000002L1234 197.75L1238.9 192.85000000000002" fill="none" stroke="#3b3b3b" stroke-width="2.2" stroke-linecap="round" stroke-linejoin="round"/>
<path d="M1186 245H1214M1202.5 253H1214M1202.5 261H1214M1186 269H1214" stroke="#3b3b3b" stroke-width="2" fill="none" shape-rendering="crispEdges"/>
<g fill="none" stroke="#3b86c8" stroke-width="2" stroke-linecap="round" stroke-linejoin="round"><path d="M1187 257H1197.5"/><path d="M1191.5 252.5L1187 257L1191.5 261.5"/></g>
<path d="M1238 245H1266M1254.5 253H1266M1254.5 261H1266M1238 269H1266" stroke="#3b3b3b" stroke-width="2" fill="none" shape-rendering="crispEdges"/>
<g fill="none" stroke="#3b86c8" stroke-width="2" stroke-linecap="round" stroke-linejoin="round"><path d="M1238.5 257H1249"/><path d="M1244.5 252.5L1249 257L1244.5 261.5"/></g>
<g fill="none" stroke="#3b86c8" stroke-width="2.3" stroke-linecap="butt" stroke-linejoin="miter"><path d="M1341.5 194.5C1341.5 199.5 1339 202.8 1333.5 202.8H1327.5"/><path d="M1334 196.6L1326.8 202.8L1333.7 209"/></g>
<rect x="1311" y="243" width="28" height="28" fill="#fff" stroke="#3b3b3b" stroke-width="2"/><path d="M1325 243V249M1325 265V271" stroke="#3b3b3b" stroke-width="1.8"/><rect x="1311" y="249" width="28" height="16" fill="#fff" stroke="#3b86c8" stroke-width="2"/><g fill="none" stroke="#3b86c8" stroke-width="1.8" stroke-linecap="round" stroke-linejoin="round"><path d="M1316 257H1334"/><path d="M1319.5 253.5L1316 257L1319.5 260.5M1330.5 253.5L1334 257L1330.5 260.5"/></g>
<path d="M1621.1 256.85L1626 261.75L1630.9 256.85" fill="none" stroke="#3b3b3b" stroke-width="2.2" stroke-linecap="round" stroke-linejoin="round"/>
<path d="M1955.6 192.85000000000002L1960.5 197.75L1965.4 192.85000000000002" fill="none" stroke="#3b3b3b" stroke-width="2.2" stroke-linecap="round" stroke-linejoin="round"/>
<g fill="none" stroke="#3b3b3b" stroke-width="2.2"><path d="M1707 267.4H1691.3V249.3H1720.6V256"/><path d="M1699.5 253.5H1696V263H1699.5M1707 253.8C1704 255 1704 261.5 1707 262.8" stroke-width="1.7"/><path d="M1713 253.8C1714.5 254.3 1715.5 255.3 1716 256.5" stroke-width="1.7"/></g><g fill="#fbe9d2" stroke="#d4711c" stroke-width="1.9"><path d="M1707.2 260V269.8C1707.2 274 1720.8 274 1720.8 269.8V260"/><ellipse cx="1714" cy="260" rx="6.8" ry="2.9" fill="#fdf0c8"/><path d="M1707.2 265C1707.2 269 1720.8 269 1720.8 265" fill="none"/></g>
<path d="M1739.1 256.35L1744 261.25L1748.9 256.35" fill="none" stroke="#3b3b3b" stroke-width="2.2" stroke-linecap="round" stroke-linejoin="round"/>
<path d="M1841.8 246.2C1845.8 246.2 1848.6 249.3 1848.6 254C1848.6 261.5 1843.5 267.5 1835.2 270L1834.3 268C1838.5 266.2 1841 263.3 1841.3 259.6C1837.8 259.6 1835.2 256.8 1835.2 253C1835.2 249.1 1838 246.2 1841.8 246.2Z" fill="#3b3b3b"/>
<g fill="none" stroke="#3b86c8" stroke-width="2" stroke-linecap="round" stroke-linejoin="round"><path d="M1883 250.8H1899"/><path d="M1888 245.8L1883 250.8L1888 255.8"/></g>
<g fill="none" stroke="#3b86c8" stroke-width="2" stroke-linecap="round" stroke-linejoin="round"><path d="M1934.5 265.2H1951"/><path d="M1946 260.2L1951 265.2L1946 270.2"/></g>
<rect x="2028.5" y="171" width="54.5" height="42" fill="#fafafa" stroke="#3b3b3b" stroke-width="2"/><path d="M2028.5 185H2083M2028.5 199H2083M2039 171V213M2055 171V213M2073 171V213" stroke="#5a5a5a" stroke-width="1.6" fill="none"/><rect x="2039" y="171" width="24.5" height="14" fill="#f29a9a" stroke="#cc3a2f" stroke-width="2"/><rect x="2039" y="185" width="16" height="14" fill="#8fbce8" stroke="#2a6fc0" stroke-width="2"/><rect x="2039" y="199" width="28" height="14" fill="#f29a9a" stroke="#cc3a2f" stroke-width="2"/>
<path d="M2078.2999999999997 272.85L2083.2 277.75L2088.1 272.85" fill="none" stroke="#3b3b3b" stroke-width="2.2" stroke-linecap="round" stroke-linejoin="round"/>
<rect x="2152.5" y="171" width="55" height="42" fill="#fafafa" stroke="#3b3b3b" stroke-width="2"/><rect x="2171" y="185" width="36.5" height="28" fill="#8fbce8"/><path d="M2171 185H2207.5M2171 199H2207.5M2171 185V213M2189 185V213" stroke="#2a6fc0" stroke-width="2" fill="none"/><path d="M2152.5 185H2171M2152.5 199H2171M2171 171V185M2189 171V185" stroke="#3b3b3b" stroke-width="1.6" fill="none"/>
<g transform="translate(0,0)"><path d="M2183.5 208.5L2206.5 186.5C2209 184 2212.5 186.5 2211 189.5L2190.5 214.5" fill="#fafafa" stroke="#fff" stroke-width="6" stroke-linejoin="round"/><path d="M2166.5 218.5C2172 218 2173.5 214 2175.5 211.5C2178 208 2183.5 207.5 2187 210.5C2190.5 214 2189.5 219 2185.5 222C2180 225.5 2171 224 2166.5 218.5Z" fill="#fff" stroke="#fff" stroke-width="5"/><path d="M2183.5 208.5L2206.5 186.5C2209 184 2212.5 186.5 2211 189.5L2190.5 214.5" fill="#fafafa" stroke="#3b3b3b" stroke-width="1.8" stroke-linejoin="round"/><path d="M2166.5 218.5C2172 218 2173.5 214 2175.5 211.5C2178 208 2183.5 207.5 2187 210.5C2190.5 214 2189.5 219 2185.5 222C2180 225.5 2171 224 2166.5 218.5Z" fill="#8fbce8" stroke="#2a6fc0" stroke-width="2"/></g>
<path d="M2226.4 272.85L2231.3 277.75L2236.2000000000003 272.85" fill="none" stroke="#3b3b3b" stroke-width="2.2" stroke-linecap="round" stroke-linejoin="round"/>
<rect x="2278.5" y="171" width="55" height="42" fill="#fafafa" stroke="#3b3b3b" stroke-width="2"/><path d="M2278.5 181H2334M2278.5 203H2334M2289 171V213M2323.5 171V213" stroke="#5a5a5a" stroke-width="1.6" fill="none"/><rect x="2289" y="181" width="34.5" height="22" fill="#8fbce8" stroke="#2a6fc0" stroke-width="2"/>
<g transform="translate(126,0)"><path d="M2183.5 208.5L2206.5 186.5C2209 184 2212.5 186.5 2211 189.5L2190.5 214.5" fill="#fafafa" stroke="#fff" stroke-width="6" stroke-linejoin="round"/><path d="M2166.5 218.5C2172 218 2173.5 214 2175.5 211.5C2178 208 2183.5 207.5 2187 210.5C2190.5 214 2189.5 219 2185.5 222C2180 225.5 2171 224 2166.5 218.5Z" fill="#fff" stroke="#fff" stroke-width="5"/><path d="M2183.5 208.5L2206.5 186.5C2209 184 2212.5 186.5 2211 189.5L2190.5 214.5" fill="#fafafa" stroke="#3b3b3b" stroke-width="1.8" stroke-linejoin="round"/><path d="M2166.5 218.5C2172 218 2173.5 214 2175.5 211.5C2178 208 2183.5 207.5 2187 210.5C2190.5 214 2189.5 219 2185.5 222C2180 225.5 2171 224 2166.5 218.5Z" fill="#8fbce8" stroke="#2a6fc0" stroke-width="2"/></g>
<path d="M2340.1 272.85L2345 277.75L2349.9 272.85" fill="none" stroke="#3b3b3b" stroke-width="2.2" stroke-linecap="round" stroke-linejoin="round"/>
<path d="M53 438V477.5H14Z" fill="#b4b4b4" transform="translate(0,-4)"/>
<path d="M346 477H358L346 489Z" fill="#37801f"/>
<path d="M489 477H501L489 489Z" fill="#37801f"/>
<path d="M633 477H645L633 489Z" fill="#37801f"/>
<path d="M705 477H717L705 489Z" fill="#37801f"/>
<path d="M851 477H863L851 489Z" fill="#37801f"/>
<path d="M997 477H1009L997 489Z" fill="#37801f"/>
<path d="M1197 477H1209L1197 489Z" fill="#37801f"/>
<path d="M1365 477H1377L1365 489Z" fill="#37801f"/>
<path d="M1511 477H1523L1511 489Z" fill="#37801f"/>
<path d="M1657 477H1669L1657 489Z" fill="#37801f"/>
<path d="M1803 477H1815L1803 489Z" fill="#37801f"/>
<path d="M1949 477H1961L1949 489Z" fill="#37801f"/>
<path d="M2000 477H2012L2000 489Z" fill="#37801f"/>
<path d="M2056 477H2068L2056 489Z" fill="#37801f"/>
<path d="M2256 477H2268L2256 489Z" fill="#37801f"/>
<path d="M2331 477H2343L2331 489Z" fill="#37801f"/>
<path d="M476 524H488V536Z" fill="#e8301f"/>
<path d="M692 524H704V536Z" fill="#e8301f"/>
<path d="M1790 524H1802V536Z" fill="#e8301f"/>
<path d="M1936 524H1948V536Z" fill="#e8301f"/>
<path d="M2043 572H2055V584Z" fill="#e8301f"/>
</svg>
<span class="t" style="top:28.1px;font-size:15.5px;line-height:23px;color:#377b4a;font-weight:700;left:35.5px;transform:scaleX(1.2043);">x</span>
<span class="t" style="top:19.2px;font-size:23.5px;line-height:35px;color:#ffffff;left:96px;transform:scaleX(1.0319);">自動保存</span>
<span class="t" style="top:20.8px;font-size:21px;line-height:32px;color:#ffffff;left:251px;transform:scaleX(0.9048);">オフ</span>
<span class="t" style="top:18.7px;font-size:24px;line-height:36px;color:#ffffff;left:611px;transform:scaleX(1.0909);">e-tax csv_tool_1.3</span>
<span class="t" style="top:14.3px;font-size:30px;line-height:45px;color:#ffffff;left:839px;transform:scaleX(1.2251);">•</span>
<span class="t" style="top:19.2px;font-size:23.5px;line-height:35px;color:#ffffff;left:861px;transform:scaleX(0.9663);">この PC に保存済み</span>
<span class="t" style="top:17.0px;font-size:26px;line-height:39px;color:#2d6a3e;left:1529px;transform:scaleX(1.1150);">検索</span>
<span class="t" style="top:94.9px;font-size:28px;line-height:42px;color:#2b2b2b;font-weight:350;left:23px;transform:scaleX(0.6874);">ファイル</span>
<span class="t" style="top:96.0px;font-size:27px;line-height:40px;color:#1f1f1f;font-weight:700;left:133px;transform:scaleX(0.8853);">ホーム</span>
<span class="t" style="top:96.0px;font-size:26.5px;line-height:40px;color:#2b2b2b;font-weight:350;left:240px;transform:scaleX(1.0472);">挿入</span>
<span class="t" style="top:96.0px;font-size:26.5px;line-height:40px;color:#2b2b2b;font-weight:350;left:332.5px;transform:scaleX(1.0472);">描画</span>
<span class="t" style="top:94.9px;font-size:28px;line-height:42px;color:#2b2b2b;font-weight:350;left:428.5px;transform:scaleX(0.7750);">ページ レイアウト</span>
<span class="t" style="top:96.0px;font-size:26.5px;line-height:40px;color:#2b2b2b;font-weight:350;left:646px;transform:scaleX(1.0472);">数式</span>
<span class="t" style="top:94.9px;font-size:28px;line-height:42px;color:#2b2b2b;font-weight:350;left:738.5px;transform:scaleX(0.8094);">データ</span>
<span class="t" style="top:96.0px;font-size:26.5px;line-height:40px;color:#2b2b2b;font-weight:350;left:843.5px;transform:scaleX(1.0472);">校閲</span>
<span class="t" style="top:96.0px;font-size:26.5px;line-height:40px;color:#2b2b2b;font-weight:350;left:936px;transform:scaleX(1.0472);">表示</span>
<span class="t" style="top:96.0px;font-size:26.5px;line-height:40px;color:#2b2b2b;font-weight:350;left:1028.5px;transform:scaleX(1.0440);">自動化</span>
<span class="t" style="top:94.9px;font-size:28px;line-height:42px;color:#2b2b2b;font-weight:350;left:1147px;transform:scaleX(0.8272);">ヘルプ</span>
<span class="t" style="top:371.5px;font-size:27px;line-height:40px;color:#333;font-weight:300;left:24px;transform:scaleX(1.1505);">D9</span>
<span class="t" style="top:364.8px;font-size:31px;line-height:46px;color:#333;font-weight:700;font-family:'Liberation Serif','Noto Serif CJK SC',serif;left:365px;transform:scaleX(1.2590);font-style:italic;letter-spacing:-1px;">fx</span>
<span class="t" style="top:306.7px;font-size:22.5px;line-height:34px;color:#2b2b2b;font-weight:350;left:153px;transform:scaleX(0.7809);">クリップボード</span>
<span class="t" style="top:306.7px;font-size:22.5px;line-height:34px;color:#2b2b2b;font-weight:350;left:667px;transform:scaleX(0.7665);">フォント</span>
<span class="t" style="top:306.7px;font-size:22.5px;line-height:34px;color:#2b2b2b;font-weight:350;left:1291px;transform:scaleX(1.0663);">配置</span>
<span class="t" style="top:306.7px;font-size:22.5px;line-height:34px;color:#2b2b2b;font-weight:350;left:1786px;transform:scaleX(1.1107);">数値</span>
<span class="t" style="top:306.7px;font-size:22.5px;line-height:34px;color:#2b2b2b;font-weight:350;left:2144px;transform:scaleX(0.8221);">スタイル</span>
<span class="t" style="top:226.7px;font-size:23.5px;line-height:35px;color:#2b2b2b;font-weight:350;left:45px;transform:scaleX(0.8830);">貼り付け</span>
<span class="t" style="top:159.7px;font-size:23.5px;line-height:35px;color:#2b2b2b;font-weight:350;left:185.5px;transform:scaleX(0.8351);">切り取り</span>
<span class="t" style="top:211.1px;font-size:24.5px;line-height:37px;color:#2b2b2b;font-weight:350;left:185.5px;transform:scaleX(0.7415);">コピー</span>
<span class="t" style="top:264.2px;font-size:23.5px;line-height:35px;color:#2b2b2b;font-weight:350;left:186px;transform:scaleX(0.8885);">書式のコピー/貼り付け</span>
<span class="t" style="top:175.8px;font-size:22px;line-height:33px;color:#2b2b2b;font-weight:350;left:458px;transform:scaleX(0.7908);">游ゴシック</span>
<span class="t" style="top:175.7px;font-size:22.5px;line-height:34px;color:#2b2b2b;font-weight:350;left:802px;transform:scaleX(0.9912);">11</span>
<span class="t" style="top:163.6px;font-size:34px;line-height:51px;color:#3b3b3b;font-weight:300;left:892px;transform:scaleX(1.0750);">A</span>
<span class="t" style="top:173.2px;font-size:26px;line-height:39px;color:#3b3b3b;font-weight:300;left:947.5px;transform:scaleX(1.1113);">A</span>
<span class="t" style="top:235.0px;font-size:27px;line-height:40px;color:#3b3b3b;font-weight:700;left:470.2px;transform:scaleX(0.8700);">B</span>
<span class="t" style="top:237.4px;font-size:28px;line-height:42px;color:#3b3b3b;font-family:'Liberation Mono',monospace;left:522.5px;transform:scaleX(0.8922);font-style:italic;">I</span>
<span class="t" style="top:233.5px;font-size:26px;line-height:39px;color:#3b3b3b;left:570.5px;transform:scaleX(1.0667);">U</span>
<span class="t" style="top:229.4px;font-size:29px;line-height:44px;color:#3b3b3b;font-weight:300;left:831px;transform:scaleX(1.1136);">A</span>
<span class="t" style="top:237.0px;font-size:14.5px;line-height:22px;color:#555;font-weight:350;left:921px;transform:scaleX(0.9655);">ア</span>
<span class="t" style="top:254.9px;font-size:15.5px;line-height:23px;color:#555;font-weight:350;left:920px;transform:scaleX(1.0634);">亜</span>
<span class="t" style="top:171.9px;font-size:19px;line-height:28px;color:#3b3b3b;left:1314px;transform:scaleX(1.2470);">ab</span>
<span class="t" style="top:185.9px;font-size:19px;line-height:28px;color:#3b3b3b;left:1314px;transform:scaleX(1.2367);">c</span>
<span class="t" style="top:175.7px;font-size:24px;line-height:36px;color:#2b2b2b;font-weight:350;left:1350px;transform:scaleX(0.8772);">折り返して全体を表示する</span>
<span class="t" style="top:239.7px;font-size:24px;line-height:36px;color:#2b2b2b;font-weight:350;left:1350px;transform:scaleX(0.8888);">セルを結合して中央揃え</span>
<span class="t" style="top:175.2px;font-size:22.5px;line-height:34px;color:#2b2b2b;font-weight:350;left:1687px;transform:scaleX(0.9776);">文字列</span>
<span class="t" style="top:228.5px;font-size:36px;line-height:54px;color:#3b3b3b;font-weight:300;left:1772px;transform:scaleX(0.9753);">%</span>
<span class="t" style="top:235.4px;font-size:19px;line-height:28px;color:#3b3b3b;font-family:'Liberation Sans','Noto Sans CJK JP',sans-serif;left:1904px;transform:scaleX(0.7563);">0</span>
<span class="t" style="top:252.2px;font-size:19px;line-height:28px;color:#3b3b3b;font-family:'Liberation Sans','Noto Sans CJK JP',sans-serif;left:1887.5px;transform:scaleX(0.9273);">.00</span>
<span class="t" style="top:235.4px;font-size:19px;line-height:28px;color:#3b3b3b;font-family:'Liberation Sans','Noto Sans CJK JP',sans-serif;left:1940px;transform:scaleX(0.9083);">.00</span>
<span class="t" style="top:252.2px;font-size:19px;line-height:28px;color:#3b3b3b;font-family:'Liberation Sans','Noto Sans CJK JP',sans-serif;left:1956px;transform:scaleX(0.7563);">0</span>
<span class="t" style="top:224.7px;font-size:23.5px;line-height:35px;color:#2b2b2b;font-weight:350;left:2010px;transform:scaleX(0.9787);">条件付き</span>
<span class="t" style="top:256.2px;font-size:23.5px;line-height:35px;color:#2b2b2b;font-weight:350;left:2019.5px;transform:scaleX(1.0426);">書式</span>
<span class="t" style="top:223.1px;font-size:25px;line-height:38px;color:#2b2b2b;font-weight:350;left:2114.5px;transform:scaleX(0.7438);">テーブルとして</span>
<span class="t" style="top:256.2px;font-size:23.5px;line-height:35px;color:#2b2b2b;font-weight:350;left:2120px;transform:scaleX(1.0266);">書式設定</span>
<span class="t" style="top:223.1px;font-size:25px;line-height:38px;color:#2b2b2b;font-weight:350;left:2275.5px;transform:scaleX(0.8065);">セルの</span>
<span class="t" style="top:254.6px;font-size:25px;line-height:38px;color:#2b2b2b;font-weight:350;left:2257px;transform:scaleX(0.7249);">スタイル</span>
<span class="t" style="top:426.9px;font-size:29px;line-height:44px;color:#1c1c1c;font-weight:350;left:119.8px;">A</span>
<span class="t" style="top:426.9px;font-size:29px;line-height:44px;color:#1c1c1c;font-weight:350;left:263.0px;">B</span>
<span class="t" style="top:426.9px;font-size:29px;line-height:44px;color:#1c1c1c;font-weight:350;left:407.3px;">C</span>
<span class="t" style="top:426.9px;font-size:29px;line-height:44px;color:#2f6e45;font-weight:350;left:550.6px;">D</span>
<span class="t" style="top:426.9px;font-size:29px;line-height:44px;color:#1c1c1c;font-weight:350;left:660.0px;">E</span>
<span class="t" style="top:426.9px;font-size:29px;line-height:44px;color:#1c1c1c;font-weight:350;left:769.6px;">F</span>
<span class="t" style="top:426.9px;font-size:29px;line-height:44px;color:#1c1c1c;font-weight:350;left:913.6px;">G</span>
<span class="t" style="top:426.9px;font-size:29px;line-height:44px;color:#1c1c1c;font-weight:350;left:1086.0px;">H</span>
<span class="t" style="top:426.9px;font-size:29px;line-height:44px;color:#1c1c1c;font-weight:350;left:1276.3px;">I</span>
<span class="t" style="top:426.9px;font-size:29px;line-height:44px;color:#1c1c1c;font-weight:350;left:1429.8px;">J</span>
<span class="t" style="top:426.9px;font-size:29px;line-height:44px;color:#1c1c1c;font-weight:350;left:1574.2px;">K</span>
<span class="t" style="top:426.9px;font-size:29px;line-height:44px;color:#1c1c1c;font-weight:350;left:1721.7px;">L</span>
<span class="t" style="top:426.9px;font-size:29px;line-height:44px;color:#1c1c1c;font-weight:350;left:1863.8px;">M</span>
<span class="t" style="top:426.9px;font-size:29px;line-height:44px;color:#1c1c1c;font-weight:350;left:1963.6px;">N</span>
<span class="t" style="top:426.9px;font-size:29px;line-height:44px;color:#1c1c1c;font-weight:350;left:2016.8px;">O</span>
<span class="t" style="top:426.9px;font-size:29px;line-height:44px;color:#1c1c1c;font-weight:350;left:2146.4px;">P</span>
<span class="t" style="top:426.9px;font-size:29px;line-height:44px;color:#1c1c1c;font-weight:350;left:2282.3px;">Q</span>
<span class="t" style="top:474.4px;font-size:29px;line-height:44px;color:#1c1c1c;font-weight:350;left:20.0px;">1</span>
<span class="t" style="top:521.9px;font-size:29px;line-height:44px;color:#1c1c1c;font-weight:350;left:20.0px;">2</span>
<span class="t" style="top:569.4px;font-size:29px;line-height:44px;color:#1c1c1c;font-weight:350;left:20.0px;">3</span>
<span class="t" style="top:616.4px;font-size:29px;line-height:44px;color:#1c1c1c;font-weight:350;left:20.0px;">4</span>
<span class="t" style="top:663.4px;font-size:29px;line-height:44px;color:#1c1c1c;font-weight:350;left:20.0px;">5</span>
<span class="t" style="top:729.9px;font-size:29px;line-height:44px;color:#1c1c1c;font-weight:350;left:20.0px;">6</span>
<span class="t" style="top:778.4px;font-size:29px;line-height:44px;color:#1c1c1c;font-weight:350;left:20.0px;">7</span>
<span class="t" style="top:825.4px;font-size:29px;line-height:44px;color:#1c1c1c;font-weight:350;left:20.0px;">8</span>
<span class="t" style="top:872.4px;font-size:29px;line-height:44px;color:#2f6e45;font-weight:350;left:20.0px;">9</span>
<span class="t" style="top:919.4px;font-size:29px;line-height:44px;color:#1c1c1c;font-weight:350;left:12.1px;">10</span>
<span class="t" style="top:966.4px;font-size:29px;line-height:44px;color:#1c1c1c;font-weight:350;left:12.1px;">11</span>
<span class="t" style="top:1013.4px;font-size:29px;line-height:44px;color:#1c1c1c;font-weight:350;left:12.1px;">12</span>
<span class="t" style="top:1060.4px;font-size:29px;line-height:44px;color:#1c1c1c;font-weight:350;left:12.1px;">13</span>
<span class="t" style="top:1107.4px;font-size:29px;line-height:44px;color:#1c1c1c;font-weight:350;left:12.1px;">14</span>
<span class="t" style="top:1154.4px;font-size:29px;line-height:44px;color:#1c1c1c;font-weight:350;left:12.1px;">15</span>
<span class="t" style="top:1201.4px;font-size:29px;line-height:44px;color:#1c1c1c;font-weight:350;left:12.1px;">16</span>
<span class="t" style="top:1248.4px;font-size:29px;line-height:44px;color:#1c1c1c;font-weight:350;left:12.1px;">17</span>
<span class="t" style="top:1295.4px;font-size:29px;line-height:44px;color:#1c1c1c;font-weight:350;left:12.1px;">18</span>
<span class="t" style="top:1342.4px;font-size:29px;line-height:44px;color:#1c1c1c;font-weight:350;left:12.1px;">19</span>
<span class="t" style="top:1389.4px;font-size:29px;line-height:44px;color:#1c1c1c;font-weight:350;left:12.1px;">20</span>
<span class="t" style="top:1436.4px;font-size:29px;line-height:44px;color:#1c1c1c;font-weight:350;left:12.1px;">21</span>
<span class="t" style="top:477.0px;font-size:26px;line-height:39px;color:#222;font-weight:300;left:409.5px;">1</span>
<span class="t" style="top:477.0px;font-size:26px;line-height:39px;color:#222;font-weight:300;left:553.5px;">2</span>
<span class="t" style="top:477.0px;font-size:26px;line-height:39px;color:#222;font-weight:300;left:661.5px;">3</span>
<span class="t" style="top:477.0px;font-size:26px;line-height:39px;color:#222;font-weight:300;left:770.5px;">4</span>
<span class="t" style="top:477.0px;font-size:26px;line-height:39px;color:#222;font-weight:300;left:916.5px;">5</span>
<span class="t" style="top:477.0px;font-size:26px;line-height:39px;color:#222;font-weight:300;left:1089.5px;">6</span>
<span class="t" style="top:477.0px;font-size:26px;line-height:39px;color:#222;font-weight:300;left:1273.5px;">7</span>
<span class="t" style="top:477.0px;font-size:26px;line-height:39px;color:#222;font-weight:300;left:1430.5px;">8</span>
<span class="t" style="top:477.0px;font-size:26px;line-height:39px;color:#222;font-weight:300;left:1576.5px;">9</span>
<span class="t" style="top:477.0px;font-size:26px;line-height:39px;color:#222;font-weight:300;left:1715.6px;">10</span>
<span class="t" style="top:477.0px;font-size:26px;line-height:39px;color:#222;font-weight:300;left:1861.6px;">11</span>
<span class="t" style="top:477.0px;font-size:26px;line-height:39px;color:#222;font-weight:300;left:1960.1px;">12</span>
<span class="t" style="top:477.0px;font-size:26px;line-height:39px;color:#222;font-weight:300;left:2013.6px;">13</span>
<span class="t" style="top:477.0px;font-size:26px;line-height:39px;color:#222;font-weight:300;left:2141.6px;">14</span>
<span class="t" style="top:477.0px;font-size:26px;line-height:39px;color:#222;font-weight:300;left:2279.1px;">15</span>
<span class="t" style="top:525.2px;font-size:23px;line-height:34px;color:#222;font-weight:300;left:350px;letter-spacing:1px;">法定資料の</span>
<span class="t" style="top:565.2px;font-size:23px;line-height:34px;color:#222;font-weight:300;left:350px;letter-spacing:1px;">種類</span>
<span class="t" style="top:525.2px;font-size:23px;line-height:34px;color:#222;font-weight:300;left:494px;letter-spacing:1px;">整理番号1</span>
<span class="t" style="top:525.2px;font-size:23px;line-height:34px;color:#222;font-weight:300;left:638px;letter-spacing:1px;">本支</span>
<span class="t" style="top:565.2px;font-size:23px;line-height:34px;color:#222;font-weight:300;left:638px;letter-spacing:1px;">店等</span>
<span class="t" style="top:605.2px;font-size:23px;line-height:34px;color:#222;font-weight:300;left:638px;letter-spacing:1px;">区分</span>
<span class="t" style="top:645.2px;font-size:23px;line-height:34px;color:#222;font-weight:300;left:638px;letter-spacing:1px;">番号</span>
<span class="t" style="top:525.2px;font-size:23px;line-height:34px;color:#222;font-weight:300;left:710px;letter-spacing:1px;">提出義務者</span>
<span class="t" style="top:565.2px;font-size:23px;line-height:34px;color:#222;font-weight:300;left:710px;letter-spacing:1px;">の住所（居</span>
<span class="t" style="top:605.2px;font-size:23px;line-height:34px;color:#222;font-weight:300;left:710px;letter-spacing:1px;">所）又は所</span>
<span class="t" style="top:645.2px;font-size:23px;line-height:34px;color:#222;font-weight:300;left:710px;letter-spacing:1px;">在地</span>
<span class="t" style="top:525.2px;font-size:23px;line-height:34px;color:#222;font-weight:300;left:856px;letter-spacing:1px;">提出義務者</span>
<span class="t" style="top:565.2px;font-size:23px;line-height:34px;color:#222;font-weight:300;left:856px;letter-spacing:1px;">の氏名又は</span>
<span class="t" style="top:605.2px;font-size:23px;line-height:34px;color:#222;font-weight:300;left:856px;letter-spacing:1px;">名称</span>
<span class="t" style="top:525.2px;font-size:23px;line-height:34px;color:#222;font-weight:300;left:1002px;letter-spacing:1px;">提出義務者の電</span>
<span class="t" style="top:565.2px;font-size:23px;line-height:34px;color:#222;font-weight:300;left:1002px;letter-spacing:1px;">話番号</span>
<span class="t" style="top:525.2px;font-size:23px;line-height:34px;color:#222;font-weight:300;left:1202px;letter-spacing:1px;">整理番号2</span>
<span class="t" style="top:525.2px;font-size:23px;line-height:34px;color:#222;font-weight:300;left:1370px;letter-spacing:1px;">提出者の住</span>
<span class="t" style="top:565.2px;font-size:23px;line-height:34px;color:#222;font-weight:300;left:1370px;letter-spacing:1px;">所（居所）</span>
<span class="t" style="top:605.2px;font-size:23px;line-height:34px;color:#222;font-weight:300;left:1370px;letter-spacing:1px;">又は所在地</span>
<span class="t" style="top:525.2px;font-size:23px;line-height:34px;color:#222;font-weight:300;left:1516px;letter-spacing:1px;">提出者の氏</span>
<span class="t" style="top:565.2px;font-size:23px;line-height:34px;color:#222;font-weight:300;left:1516px;letter-spacing:1px;">名又は名称</span>
<span class="t" style="top:525.2px;font-size:23px;line-height:34px;color:#222;font-weight:300;left:1662px;letter-spacing:1px;">訂正表示</span>
<span class="t" style="top:525.2px;font-size:23px;line-height:34px;color:#222;font-weight:300;left:1808px;letter-spacing:1px;">年分</span>
<span class="t" style="top:525.2px;font-size:23px;line-height:34px;color:#222;font-weight:300;left:1954px;letter-spacing:1px;">支払を受ける者</span>
<span class="t" style="top:525.2px;font-size:23px;line-height:34px;color:#222;font-weight:300;left:2336px;letter-spacing:1px;">種別</span>
<span class="t" style="top:573.2px;font-size:23px;line-height:34px;color:#222;font-weight:300;left:1954px;letter-spacing:1px;">住</span>
<span class="t" style="top:613.2px;font-size:23px;line-height:34px;color:#222;font-weight:300;left:1954px;letter-spacing:1px;">所</span>
<span class="t" style="top:653.2px;font-size:23px;line-height:34px;color:#222;font-weight:300;left:1954px;letter-spacing:1px;">又</span>
<span class="t" style="top:573.2px;font-size:23px;line-height:34px;color:#222;font-weight:300;left:2005px;letter-spacing:1px;">国</span>
<span class="t" style="top:613.2px;font-size:23px;line-height:34px;color:#222;font-weight:300;left:2005px;letter-spacing:1px;">外</span>
<span class="t" style="top:653.2px;font-size:23px;line-height:34px;color:#222;font-weight:300;left:2005px;letter-spacing:1px;">住</span>
<span class="t" style="top:573.2px;font-size:23px;line-height:34px;color:#222;font-weight:300;left:2061px;letter-spacing:1px;">氏名</span>
<span class="t" style="top:573.2px;font-size:23px;line-height:34px;color:#222;font-weight:300;left:2261px;letter-spacing:1px;">役職</span>
<span class="t" style="top:613.2px;font-size:23px;line-height:34px;color:#222;font-weight:300;left:2261px;letter-spacing:1px;">名</span>
<span class="t" style="top:828.5px;font-size:27.5px;line-height:41px;color:#222;font-weight:300;left:206px;transform:scaleX(1.0364);">エラー有</span>
</div></body></html>
